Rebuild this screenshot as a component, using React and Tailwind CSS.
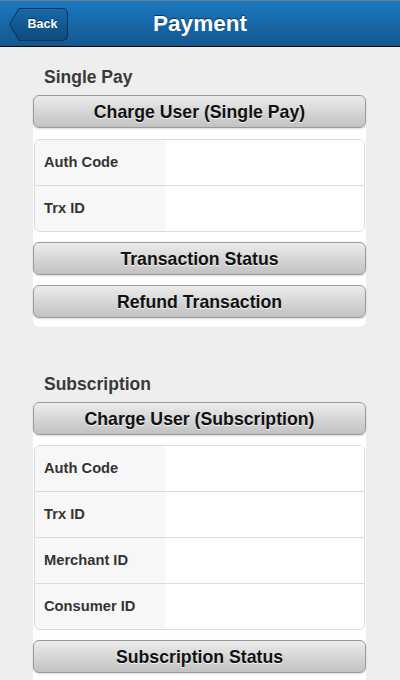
import React from "react";

function Btn({ children }) {
  return (
    <div className="h-[33px] pt-[2px] rounded-[6px] border border-[#9a9a9a] bg-gradient-to-b from-[#ececec] to-[#c2c2c2] flex items-center justify-center text-[17.7px] font-bold text-[#111] [text-shadow:0_1px_0_#f3f3f3] shadow-[0_1px_2px_rgba(0,0,0,0.15)]">
      {children}
    </div>
  );
}

function List({ rows }) {
  return (
    <div className="mx-[1px] rounded-[6px] border border-[#dcdcdc] overflow-hidden bg-white">
      {rows.map((r, i) => (
        <div
          key={r}
          className={
            "flex " + (i > 0 ? "h-[46px] border-t border-[#dcdcdc]" : "h-[45px]")
          }
        >
          <div className="w-[130px] bg-[#f7f7f7] flex items-center pl-[9px] text-[14.7px] font-bold text-[#333]">
            {r}
          </div>
          <div className="flex-1 bg-white" />
        </div>
      ))}
    </div>
  );
}

export default function App() {
  return (
    <div className="w-[400px] h-[680px] overflow-hidden bg-[#eeeeee] font-['Liberation_Sans',Arial,sans-serif]">
      <header className="relative h-[47px] border-t border-[#6b7a88] border-b border-b-[#0b0b0b] bg-gradient-to-b from-[#1b79c1] to-[#13578f] flex items-center justify-center">
        <div className="absolute left-[8px] top-[6px] w-[61px] h-[35px]">
          <svg width="61" height="35" viewBox="0 0 61 35" className="absolute inset-0">
            <defs>
              <linearGradient id="bk" x1="0" y1="0" x2="0" y2="1">
                <stop offset="0" stopColor="#1769aa" />
                <stop offset="1" stopColor="#0e4a7d" />
              </linearGradient>
            </defs>
            <path
              d="M11 1.5 L54 1.5 Q59.5 1.5 59.5 7 L59.5 28 Q59.5 33.5 54 33.5 L11 33.5 L1.5 17.5 Z"
              fill="url(#bk)"
              stroke="#0a2f52"
              strokeWidth="1"
            />
          </svg>
          <div className="absolute inset-0 pl-[8px] flex items-center justify-center text-[12.5px] font-bold text-white [text-shadow:0_-1px_0_#0a3050]">
            Back
          </div>
        </div>
        <div className="text-[22.5px] font-bold text-white [text-shadow:0_-1px_1px_#08345a]">
          Payment
        </div>
      </header>

      <main className="pl-[33px] pr-[34px] pt-[19px]">
        <div className="h-[22px] leading-[22px] pl-[11px] text-[17.5px] font-bold text-[#3a3a3a] mb-[7px]">
          Single Pay
        </div>
        <div className="bg-white rounded-[6px] pb-[9px] flex flex-col">
          <Btn>Charge User (Single Pay)</Btn>
          <div className="h-[11px]" />
          <List rows={["Auth Code", "Trx ID"]} />
          <div className="h-[10px]" />
          <Btn>Transaction Status</Btn>
          <div className="h-[10px]" />
          <Btn>Refund Transaction</Btn>
        </div>

        <div className="mt-[46px] h-[22px] leading-[22px] pl-[11px] text-[17.5px] font-bold text-[#3a3a3a] mb-[7px]">
          Subscription
        </div>
        <div className="bg-white rounded-[6px] pb-[20px] flex flex-col">
          <Btn>Charge User (Subscription)</Btn>
          <div className="h-[10px]" />
          <List rows={["Auth Code", "Trx ID", "Merchant ID", "Consumer ID"]} />
          <div className="h-[10px]" />
          <Btn>Subscription Status</Btn>
        </div>
      </main>
    </div>
  );
}
